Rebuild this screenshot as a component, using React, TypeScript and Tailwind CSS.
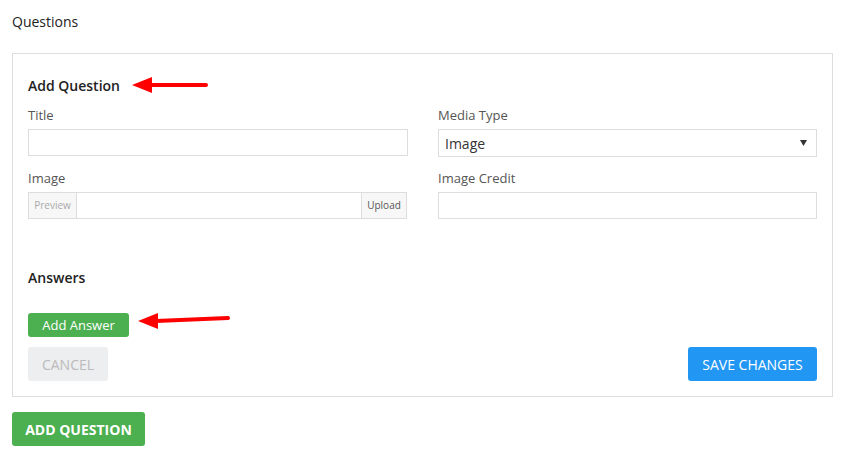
const Label = ({ text }: { text: string }) => (
   <div className="text-[13px] leading-[18px] text-[#555] h-[18px]">{text}</div>
);

const TextInput = () => (
   <input type="text" className="block w-full h-[27px] border border-[#ddd] bg-white outline-none px-2 text-[14px]" />
);

const App = () => {
   return (
      <div className="relative w-[841px] h-[466px] bg-white font-['Open_Sans',sans-serif] text-[#333] pt-3 px-3">
         <div className="text-[14px] leading-5 font-medium text-[#222]">Questions</div>

         <div className="mt-[21px] w-[821px] border border-[#ddd] pl-[15px] pr-[15px] pt-[21px] pb-[15px]">
            <div className="text-[14px] leading-[22px] font-semibold text-[#222]">Add Question</div>

            <div className="mt-[9px] grid grid-cols-[380px_379px] gap-x-[30px]">
               {/* row 1 */}
               <div>
                  <Label text="Title" />
                  <div className="mt-[5px]"><TextInput /></div>
               </div>
               <div>
                  <Label text="Media Type" />
                  <div className="mt-[5px] h-[28px] border border-[#ddd] bg-white flex items-center justify-between pl-[6px] pr-[9px]">
                     <span className="text-[14px] text-[#333]">Image</span>
                     <svg width="7" height="6" viewBox="0 0 7 6"><polygon points="0,0 7,0 3.5,6" fill="#333" /></svg>
                  </div>
               </div>

               {/* row 2 */}
               <div className="mt-[12px]">
                  <Label text="Image" />
                  <div className="mt-[5px] h-[27px] w-[379px] flex border border-[#ddd] bg-white">
                     <div className="w-[48px] flex items-center justify-center bg-[#f7f7f7] border-r border-[#ddd] text-[10px] text-[#aaa]">Preview</div>
                     <input type="text" className="flex-1 min-w-0 outline-none px-2 text-[13px]" />
                     <div className="w-[45px] flex items-center justify-center bg-[#f7f7f7] border-l border-[#ddd] text-[10px] text-[#555]">Upload</div>
                  </div>
               </div>
               <div className="mt-[12px]">
                  <Label text="Image Credit" />
                  <div className="mt-[5px]"><TextInput /></div>
               </div>
            </div>

            <div className="mt-[48px] text-[14px] leading-[22px] font-semibold text-[#222]">Answers</div>

            <button className="mt-[24px] block w-[101px] h-6 rounded-[3px] bg-[#4caf50] text-white text-[13px] leading-6 text-center">Add Answer</button>

            <div className="mt-[10px] flex justify-between">
               <button className="w-20 h-[34px] rounded-[3px] bg-[#eceef0] text-[#bbb] text-[14px]">CANCEL</button>
               <button className="w-[129px] h-[34px] rounded-[3px] bg-[#2196f3] text-white text-[14px]">SAVE CHANGES</button>
            </div>
         </div>

         <button className="mt-[15px] block w-[133px] h-[34px] rounded-[3px] bg-[#4caf50] text-white text-[14px] font-bold">ADD QUESTION</button>

         {/* annotation arrows */}
         <svg className="absolute left-[130px] top-[75px]" width="80" height="20" viewBox="0 0 80 20">
            <line x1="20" y1="10" x2="76" y2="10" stroke="#f00" strokeWidth="4" strokeLinecap="round" />
            <polygon points="2,10 22,2 22,18" fill="#f00" />
         </svg>
         <svg className="absolute left-[136px] top-[311px]" width="96" height="20" viewBox="0 0 96 20">
            <line x1="20" y1="10" x2="92" y2="7" stroke="#f00" strokeWidth="4" strokeLinecap="round" />
            <polygon points="2,10 22,2 22,18" fill="#f00" />
         </svg>
      </div>
   );
};

export default App;
